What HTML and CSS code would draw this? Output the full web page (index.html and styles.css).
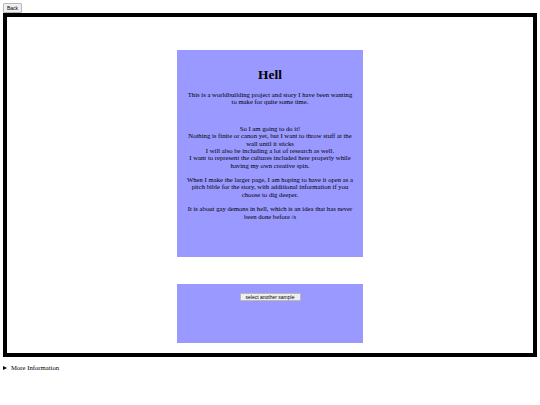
FILE: index.html
```html
<!DOCTYPE html>
<html>
<head>
<meta charset="utf-8">
<link rel="stylesheet" href="styles.css">
</head>
<body>
<button class="back">Back</button>
<div class="frame">
  <div class="panel story">
    <h1 class="title">Hell</h1>
    <p class="para">This is a worldbuilding project and story I have been wanting to make for quite some time.</p>
    <p class="para gap">So I am going to do it!<br>Nothing is finite or canon yet, but I want to throw stuff at the wall until it sticks<br>I will also be including a lot of research as well.<br>I want to represent the cultures included here properly while having my own creative spin.</p>
    <p class="para">When I make the larger page, I am hoping to have it open as a pitch bible for the story, with additional information if you choose to dig deeper.</p>
    <p class="para">It is about gay demons in hell, which is an idea that has never been done before /s</p>
  </div>
  <div class="panel controls">
    <button class="sample">select another sample</button>
  </div>
</div>
<details class="more">
  <summary class="summary"><span class="marker"></span>More Information</summary>
</details>
</body>
</html>
```

FILE: styles.css
```css
html, body {
  margin: 0;
  padding: 0;
  background: #ffffff;
}
body {
  padding: 3px;
  font-family: "Liberation Serif", "Times New Roman", serif;
  color: #000;
}
.back {
  display: block;
  width: 19px;
  height: 10px;
  padding: 0;
  margin: 0;
  font-family: "Liberation Sans", Arial, sans-serif;
  font-size: 5px;
  line-height: 8px;
  color: #000;
  background: #efefef;
  border: 1px solid #b8b8b8;
  border-radius: 1px;
}
.frame {
  border: 4px solid #000;
  height: 344px;
  box-sizing: border-box;
  display: flex;
  flex-direction: column;
  align-items: center;
  padding-top: 33px;
}
.panel {
  width: 186px;
  background: #9999ff;
  box-sizing: border-box;
  flex: none;
}
.story {
  height: 207px;
  padding: 17px 8px 0;
  text-align: center;
}
.title {
  margin: 0 0 9px;
  font-size: 13.4px;
  line-height: 15px;
  font-weight: bold;
}
.para {
  margin: 0 0 7.3px;
  font-size: 6.7px;
  line-height: 7.3px;
}
.gap {
  margin-top: 19.5px;
}
.controls {
  height: 59px;
  margin-top: 27px;
  display: flex;
  justify-content: center;
  align-items: flex-start;
  padding-top: 9px;
}
.sample {
  width: 61px;
  height: 8px;
  padding: 0;
  margin: 0;
  font-family: "Liberation Sans", Arial, sans-serif;
  font-size: 5px;
  line-height: 6px;
  color: #000;
  background: #efefef;
  border: 1px solid #b8b8b8;
  border-radius: 1px;
}
.more {
  margin-top: 7px;
  font-size: 6.7px;
  line-height: 8px;
}
.summary {
  list-style: none;
  display: flex;
  align-items: center;
}
.summary::-webkit-details-marker {
  display: none;
}
.marker {
  width: 0;
  height: 0;
  border-left: 4px solid #000;
  border-top: 2px solid transparent;
  border-bottom: 2px solid transparent;
  margin: 0 4px 0 0;
}
```
